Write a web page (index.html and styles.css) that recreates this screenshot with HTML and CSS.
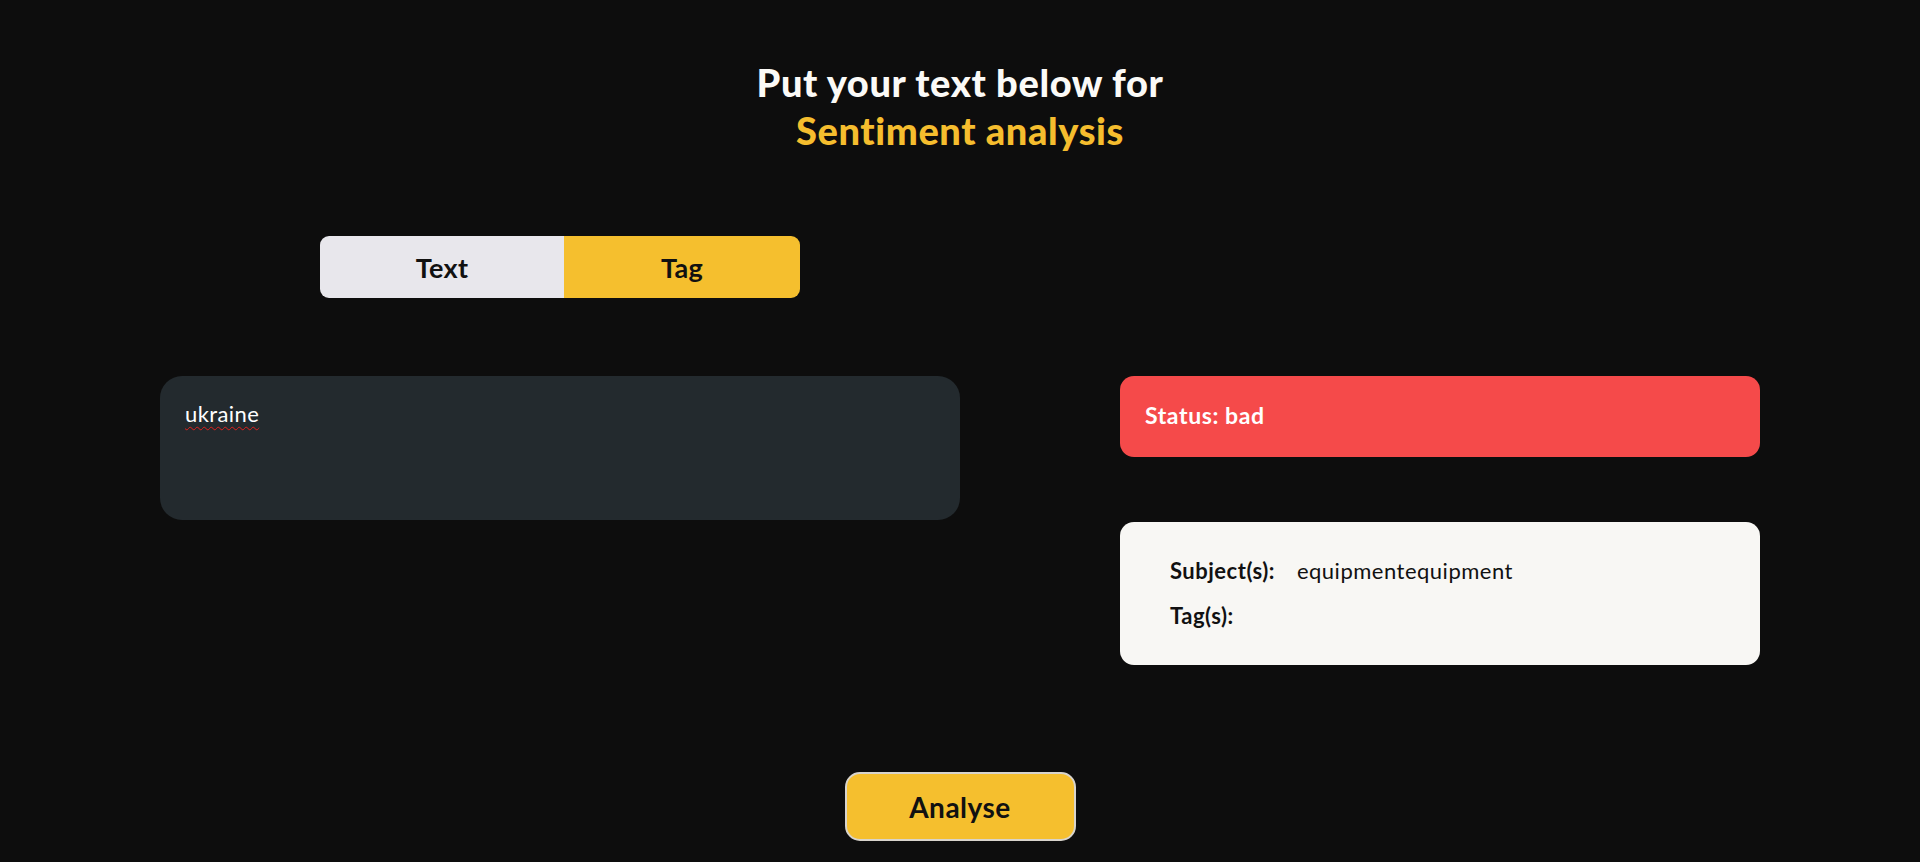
FILE: index.html
```html
<!DOCTYPE html>
<html lang="en">
<head>
<meta charset="utf-8">
<title>Sentiment analysis</title>
<link rel="stylesheet" href="styles.css">
</head>
<body>
<main class="page">
  <header class="hero">
    <h1 class="hero-title">Put your text below for<br><span class="accent">Sentiment analysis</span></h1>
  </header>

  <div class="toggle-row">
    <div class="toggle">
      <button class="toggle-btn toggle-text">Text</button>
      <button class="toggle-btn toggle-tag active">Tag</button>
    </div>
  </div>

  <section class="panels">
    <div class="input-box">
      <span class="input-text">ukraine</span>
    </div>
    <div class="results">
      <div class="status status-bad">Status: bad</div>
      <div class="info">
        <div class="info-row"><span class="info-label">Subject(s):</span><span class="info-value">equipmentequipment</span></div>
        <div class="info-row"><span class="info-label">Tag(s):</span></div>
      </div>
    </div>
  </section>

  <div class="action-row">
    <button class="analyse">Analyse</button>
  </div>
</main>
</body>
</html>
```

FILE: styles.css
```css
* { box-sizing: border-box; }
html, body {
  margin: 0;
  padding: 0;
  background: #0d0d0d;
  height: 100%;
}
body {
  font-family: Lato, "Noto Sans", sans-serif;
  color: #fff;
  overflow: hidden;
}
.page {
  padding: 0 160px;
}
.hero {
  padding-top: 58px;
  text-align: center;
}
.hero-title {
  margin: 0;
  font-size: 38px;
  font-weight: 900;
  line-height: 48px;
  letter-spacing: 0.6px;
  color: #fbfaf7;
}
.accent { color: #f5bd2e; }

.toggle-row {
  width: 800px;
  display: flex;
  justify-content: center;
  margin-top: 82px;
}
.toggle {
  display: flex;
  width: 480px;
  height: 62px;
  border-radius: 9px;
  overflow: hidden;
}
.toggle-btn {
  border: 0;
  margin: 0;
  font-family: inherit;
  font-size: 27px;
  font-weight: 700;
  letter-spacing: 0.3px;
  color: #111;
  cursor: pointer;
}
.toggle-text { width: 244px; background: #e8e7ec; }
.toggle-tag { flex: 1; background: #f5bf2e; }

.panels {
  display: grid;
  grid-template-columns: 800px 640px;
  column-gap: 160px;
  margin-top: 78px;
  align-items: start;
}
.input-box {
  height: 144px;
  background: #232a2e;
  border-radius: 22px;
  padding: 24px 25px;
  font-size: 22px;
  letter-spacing: 0.4px;
  color: #fff;
}
.input-text {
  text-decoration: underline wavy #e0201c;
  text-decoration-thickness: 1px;
  text-underline-offset: 4px;
}
.results {
  display: flex;
  flex-direction: column;
  gap: 65px;
}
.status {
  height: 81px;
  border-radius: 14px;
  padding: 0 25px 4px;
  display: flex;
  align-items: center;
  font-size: 23px;
  font-weight: 700;
  letter-spacing: 0.6px;
}
.status-bad { background: #f54a4a; color: #fff; }
.info {
  height: 143px;
  background: #f8f7f4;
  border-radius: 14px;
  padding: 32px 50px;
  color: #111;
  display: flex;
  flex-direction: column;
  gap: 11px;
}
.info-row {
  font-size: 22px;
  line-height: 34px;
  letter-spacing: 0.5px;
}
.info-label {
  font-weight: 700;
  margin-right: 22px;
}
.info-value { font-weight: 400; }

.action-row {
  display: flex;
  justify-content: center;
  margin-top: 107px;
}
.analyse {
  width: 231px;
  height: 69px;
  background: #f5bf2e;
  border: 2px solid #d8d4cc;
  border-radius: 15px;
  font-family: inherit;
  font-size: 28px;
  font-weight: 700;
  letter-spacing: 0.5px;
  color: #111;
  cursor: pointer;
}
```
